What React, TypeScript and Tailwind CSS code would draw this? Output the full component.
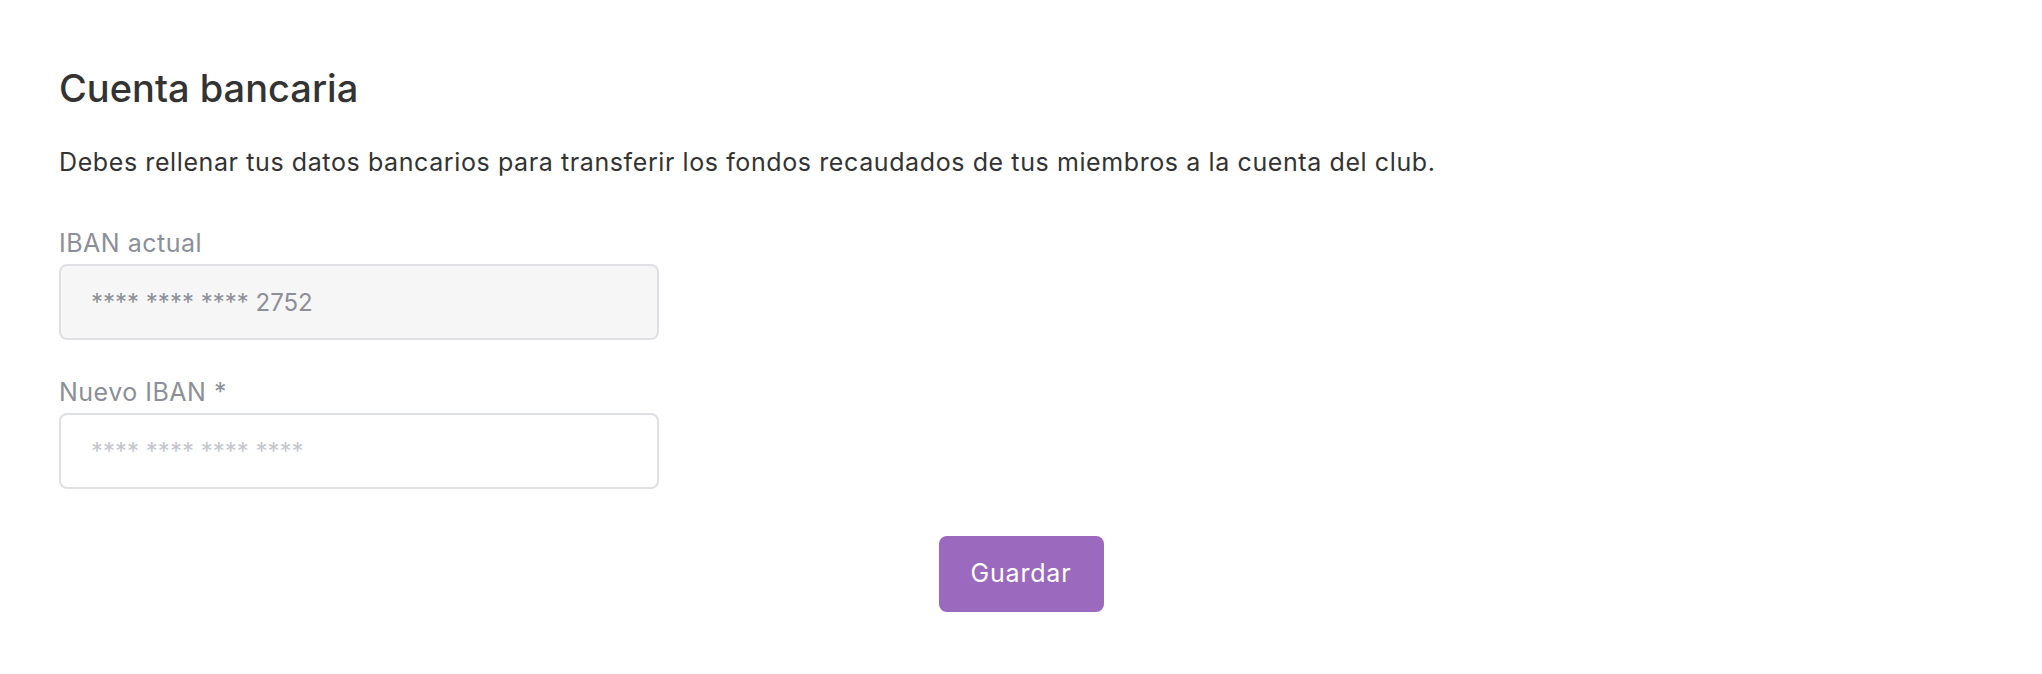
export default function App() {
  return (
    <div className="min-h-screen bg-white px-[59px] pt-[66px] font-['Inter',sans-serif] text-[#333333]">
      <h2 className="text-[38px] leading-[44px] font-medium">Cuenta bancaria</h2>
      <p className="mt-[36px] text-[25px] leading-[32px] tracking-[0.6px]">
        Debes rellenar tus datos bancarios para transferir los fondos recaudados de tus miembros a la cuenta del club.
      </p>

      <form className="mt-[49px]" onSubmit={(e) => e.preventDefault()}>
        <div className="flex flex-col gap-[5px]">
          <label className="text-[25px] leading-[32px] tracking-[0.5px] text-[#8c8f98]">IBAN actual</label>
          <input
            disabled
            value="**** **** **** 2752"
            className="h-[76px] w-[600px] rounded-[8px] border-2 border-[#dfe0e4] bg-[#f6f6f6] px-[30px] text-[24px] text-[#8c8f98]"
          />
        </div>

        <div className="mt-[36px] flex flex-col gap-[5px]">
          <label className="text-[25px] leading-[32px] tracking-[0.5px] text-[#8c8f98]">Nuevo IBAN *</label>
          <input
            placeholder="**** **** **** ****"
            className="h-[76px] w-[600px] rounded-[8px] border-2 border-[#dfe0e4] bg-white px-[30px] text-[24px] text-[#333333] placeholder:text-[#c4c6cc] outline-none"
          />
        </div>

        <div className="mt-[47px] flex justify-center">
          <button
            type="submit"
            className="h-[76px] w-[165px] rounded-[8px] bg-[#9b69bd] text-[25px] tracking-[0.8px] text-white"
          >
            Guardar
          </button>
        </div>
      </form>
    </div>
  );
}
